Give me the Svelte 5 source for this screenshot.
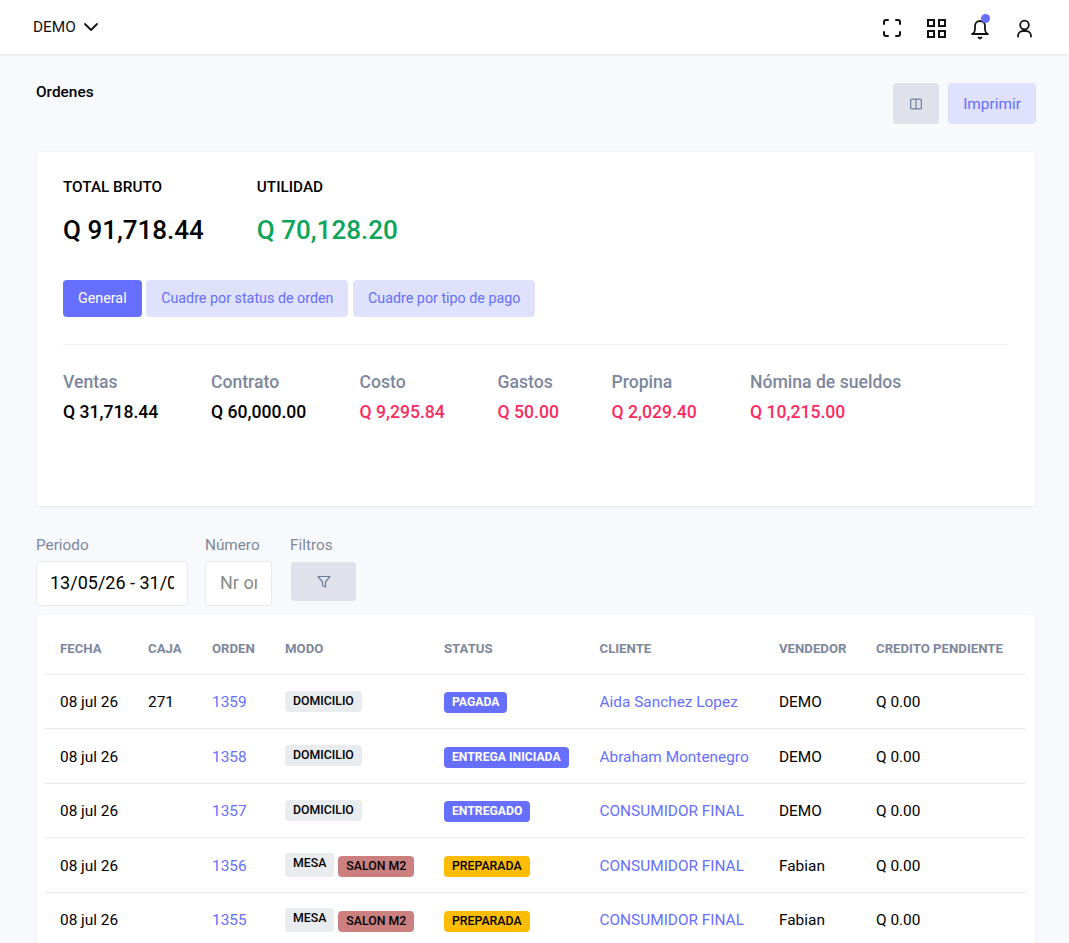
<script>
	const totals = [
		{ label: 'Ventas', value: 'Q 31,718.44', width: 148 },
		{ label: 'Contrato', value: 'Q 60,000.00', width: 148.5 },
		{ label: 'Costo', value: 'Q 9,295.84', red: true, width: 138 },
		{ label: 'Gastos', value: 'Q 50.00', red: true, width: 114 },
		{ label: 'Propina', value: 'Q 2,029.40', red: true, width: 138.5 },
		{ label: 'Nómina de sueldos', value: 'Q 10,215.00', red: true, width: 200 }
	];

	const columns = ['Fecha', 'Caja', 'Orden', 'Modo', 'Status', 'Cliente', 'Vendedor', 'Credito pendiente'];

	const rows = [
		{ caja: '271', orden: '1359', mesa: false, status: 'Pagada', tone: 'blue', cliente: 'Aida Sanchez Lopez', vendedor: 'DEMO' },
		{ caja: '', orden: '1358', mesa: false, status: 'Entrega iniciada', tone: 'blue', cliente: 'Abraham Montenegro', vendedor: 'DEMO' },
		{ caja: '', orden: '1357', mesa: false, status: 'Entregado', tone: 'blue', cliente: 'CONSUMIDOR FINAL', vendedor: 'DEMO' },
		{ caja: '', orden: '1356', mesa: true, status: 'Preparada', tone: 'yellow', cliente: 'CONSUMIDOR FINAL', vendedor: 'Fabian' },
		{ caja: '', orden: '1355', mesa: true, status: 'Preparada', tone: 'yellow', cliente: 'CONSUMIDOR FINAL', vendedor: 'Fabian' }
	];
</script>

<header class="topbar">
	<div class="brand">
		<span>DEMO</span>
		<svg width="16" height="16" viewBox="0 0 16 16" fill="none" stroke="#111" stroke-width="1.8" stroke-linecap="round" stroke-linejoin="round"><path d="M2 5l6 6 6-6" /></svg>
	</div>
	<div class="tools">
		<svg width="24" height="24" viewBox="0 0 24 24" fill="none" stroke="#111" stroke-width="2" stroke-linecap="round" stroke-linejoin="round"><path d="M4 8V6a2 2 0 0 1 2-2h2M16 4h2a2 2 0 0 1 2 2v2M20 16v2a2 2 0 0 1-2 2h-2M8 20H6a2 2 0 0 1-2-2v-2" /></svg>
		<svg width="24" height="24" viewBox="0 0 24 24" fill="none" stroke="#111" stroke-width="2"><rect x="4" y="4" width="6" height="6" /><rect x="15" y="4" width="6" height="6" /><rect x="4" y="15" width="6" height="6" /><rect x="15" y="15" width="6" height="6" /></svg>
		<span class="bell">
			<svg width="24" height="24" viewBox="0 0 24 24" fill="none" stroke="#111" stroke-width="1.8" stroke-linecap="round" stroke-linejoin="round"><path d="M6 16.5c.8-1 1-2 1-4V10a5 5 0 0 1 10 0v2.500c0 2 .2 3 1 4 .4.500.9 1 2 1.500H4c1.100-.5 1.600-1 2-1.500zM10.500 21.500l1.500 1 1.500-1" /></svg>
			<i></i>
		</span>
		<svg width="24" height="24" viewBox="0 0 24 24" fill="none" stroke="#111" stroke-width="1.800" stroke-linecap="round"><circle cx="12.500" cy="9" r="4.300" /><path d="M6 20.500V20a5 5 0 0 1 5-5h3a5 5 0 0 1 5 5v.5" /></svg>
	</div>
</header>

<main class="page">
	<div class="title-row">
		<h1>Ordenes</h1>
		<div class="actions">
			<button class="btn-columns" aria-label="Columnas">
				<svg width="14" height="14" viewBox="0 0 14 14" fill="none" stroke="#6f7f99" stroke-width="1.200"><rect x="1.600" y="2.100" width="10.800" height="9.800" rx="1" /><path d="M7 2v10" /></svg>
			</button>
			<button class="btn-print">Imprimir</button>
		</div>
	</div>

	<section class="card summary">
		<div class="headline">
			<div class="total">
				<h2>TOTAL BRUTO</h2>
				<p>Q 91,718.44</p>
			</div>
			<div class="total">
				<h2>UTILIDAD</h2>
				<p class="green">Q 70,128.20</p>
			</div>
		</div>
		<div class="tabs">
			<button class="tab active">General</button>
			<button class="tab">Cuadre por status de orden</button>
			<button class="tab">Cuadre por tipo de pago</button>
		</div>
		<hr />
		<div class="breakdown">
			{#each totals as t}
				<div style="width: {t.width}px">
					<span class="b-label">{t.label}</span>
					<span class="b-value" class:red={t.red}>{t.value}</span>
				</div>
			{/each}
		</div>
	</section>

	<div class="filters">
		<div class="field">
			<label for="periodo">Periodo</label>
			<input id="periodo" class="in-periodo" value="13/05/26 - 31/05/26" />
		</div>
		<div class="field">
			<label for="numero">Número</label>
			<input id="numero" class="in-numero" placeholder="Nr orden" />
		</div>
		<div class="field">
			<span class="f-label">Filtros</span>
			<button class="btn-filter" aria-label="Filtros">
				<svg width="16" height="16" viewBox="0 0 16 16" fill="none" stroke="#6f7f99" stroke-width="1.200" stroke-linejoin="round"><path d="M2 2.500h12L9.500 8v5l-3-1.500V8z" /></svg>
			</button>
		</div>
	</div>

	<section class="card orders">
		<table>
			<thead>
				<tr>
					{#each columns as c}
						<th>{c}</th>
					{/each}
				</tr>
			</thead>
			<tbody>
				{#each rows as r}
					<tr>
						<td>08 jul 26</td>
						<td>{r.caja}</td>
						<td class="link">{r.orden}</td>
						<td class="badge-cell">
							<div class="badges">
								{#if r.mesa}
									<span class="badge grey mesa">MESA</span>
									<span class="badge rose">SALON M2</span>
								{:else}
									<span class="badge grey">DOMICILIO</span>
								{/if}
							</div>
						</td>
						<td class="badge-cell">
							<div class="badges">
								<span class="badge status {r.tone}">{r.status.toUpperCase()}</span>
							</div>
						</td>
						<td class="link">{r.cliente}</td>
						<td>{r.vendedor}</td>
						<td>Q 0.00</td>
					</tr>
				{/each}
			</tbody>
		</table>
	</section>
</main>

<style>
	:global(body) {
		background: #f8f9fc;
		font-family: Roboto, "Liberation Sans", sans-serif;
		color: #000;
	}

	.topbar {
		height: 54px;
		box-sizing: border-box;
		background: #fff;
		box-shadow: 0 1px 2px rgba(60, 70, 90, 0.12);
		display: flex;
		align-items: center;
		justify-content: space-between;
		padding: 0 33px;
	}
	.brand {
		display: flex;
		align-items: center;
		gap: 7px;
		font-size: 15.400px;
		color: #111;
	}
	.tools {
		display: flex;
		align-items: center;
		gap: 20px;
		padding-top: 2px;
	}
	.tools svg {
		display: block;
	}
	.bell {
		position: relative;
		display: block;
	}
	.bell i {
		position: absolute;
		top: -2px;
		right: 2px;
		width: 9px;
		height: 9px;
		border-radius: 50%;
		background: #666fff;
	}

	.page {
		padding: 0 34px 0 36px;
		overflow: hidden;
	}
	.title-row {
		display: flex;
		justify-content: space-between;
		align-items: flex-start;
		padding-top: 29px;
		height: 98px;
		box-sizing: border-box;
	}
	h1 {
		margin: 0;
		font-size: 15.400px;
		font-weight: 500;
		line-height: 18px;
	}
	.actions {
		display: flex;
		gap: 9px;
		margin-right: -1px;
	}
	button {
		border: 0;
		font-family: inherit;
	}
	.btn-columns {
		width: 46px;
		height: 41px;
		background: #dfe2ea;
		border-radius: 4px;
		display: flex;
		align-items: center;
		justify-content: center;
		padding: 0;
	}
	.btn-print {
		width: 88px;
		height: 41px;
		background: #dfe1fd;
		color: #666fff;
		font-size: 15.400px;
		border-radius: 4px;
	}

	.card {
		background: #fff;
		border-radius: 4px;
		box-shadow: 0 1px 3px rgba(60, 70, 90, 0.1);
		margin-left: 1px;
	}
	.summary {
		height: 354px;
		box-sizing: border-box;
		padding: 26px 27px 0 26px;
	}
	.headline {
		display: flex;
		gap: 53px;
	}
	h2 {
		margin: 0;
		font-size: 15.300px;
		font-weight: 500;
		line-height: 18px;
	}
	.total p {
		margin: 18px 0 0;
		font-size: 26px;
		font-weight: 500;
		line-height: 32px;
	}
	.green {
		color: #0aa559;
	}
	.tabs {
		display: flex;
		gap: 4.500px;
		margin-top: 34px;
	}
	.tab {
		height: 37px;
		padding: 0 15px 1px;
		background: #dfe1fd;
		color: #666fff;
		font-size: 14.300px;
		border-radius: 4px;
	}
	.tab.active {
		background: #666fff;
		color: #fff;
	}
	hr {
		border: 0;
		border-top: 1px solid #eef0f4;
		margin: 27px 0 0;
	}
	.breakdown {
		display: flex;
		margin-top: 26px;
	}
	.b-label {
		display: block;
		font-size: 17.600px;
		font-weight: 500;
		line-height: 22px;
		color: #7d879c;
		white-space: nowrap;
	}
	.b-value {
		display: block;
		margin-top: 8px;
		font-size: 17.600px;
		font-weight: 500;
		line-height: 22px;
		white-space: nowrap;
	}
	.red {
		color: #fb2c62;
	}

	.filters {
		display: flex;
		align-items: flex-start;
		gap: 17px;
		margin-top: 30px;
		height: 79px;
	}
	.field label,
	.f-label {
		display: block;
		font-size: 15.300px;
		line-height: 18px;
		color: #7d879c;
		margin-bottom: 7px;
	}
	.f-label {
		margin-bottom: 8px;
	}
	input {
		display: block;
		box-sizing: border-box;
		height: 45px;
		background: #fff;
		border: 1px solid #e9ebf1;
		border-radius: 4px;
		padding: 0 14px 2px;
		font-family: inherit;
		font-size: 18px;
		color: #000;
		outline: none;
	}
	input::placeholder {
		color: #8a8a8a;
	}
	.in-periodo {
		width: 152px;
		padding: 0 13px 2px;
	}
	.in-numero {
		width: 67px;
	}
	.field:last-child {
		margin-left: 1px;
	}
	.btn-filter {
		width: 65px;
		height: 39px;
		margin-left: 1px;
		background: #dfe2ea;
		border-radius: 3px;
		display: flex;
		align-items: center;
		justify-content: center;
		padding: 0;
	}

	.orders {
		padding: 8px 9px 0 8px;
	}
	table {
		width: 100%;
		border-collapse: collapse;
		table-layout: fixed;
		font-size: 15.400px;
	}
	th {
		box-sizing: border-box;
		text-align: left;
		font-size: 13.200px;
		font-weight: 700;
		color: #7d879c;
		text-transform: uppercase;
		padding: 0 15px;
		height: 51.200px;
		white-space: nowrap;
	}
	th:nth-child(1) { width: 88px; }
	th:nth-child(2) { width: 64px; }
	th:nth-child(3) { width: 73px; }
	th:nth-child(4) { width: 159px; }
	th:nth-child(5) { width: 155.500px; }
	th:nth-child(6) { width: 179.500px; }
	th:nth-child(7) { width: 97px; }
	td {
		box-sizing: border-box;
		padding: 1.600px 15px 0;
		height: 54.500px;
		border-top: 1px solid #e9ebf1;
		white-space: nowrap;
	}
	td.badge-cell {
		padding-top: 0;
	}
	.link {
		color: #666fff;
	}
	.badges {
		display: flex;
		align-items: flex-end;
		gap: 4px;
	}
	.badge {
		display: block;
		font-size: 12.300px;
		font-weight: 500;
		line-height: 13px;
		padding: 4px 8px;
		border-radius: 4px;
	}
	.status {
		margin-top: 3px;
	}
	.grey {
		background: #e9ecef;
		color: #000;
	}
	.mesa {
		padding-bottom: 7px;
	}
	.rose {
		background: #cc7f7f;
		color: #000;
	}
	.blue {
		background: #666fff;
		color: #fff;
		font-weight: 700;
		font-size: 12.200px;
	}
	.yellow {
		background: #fcbc00;
		color: #000;
	}
</style>
